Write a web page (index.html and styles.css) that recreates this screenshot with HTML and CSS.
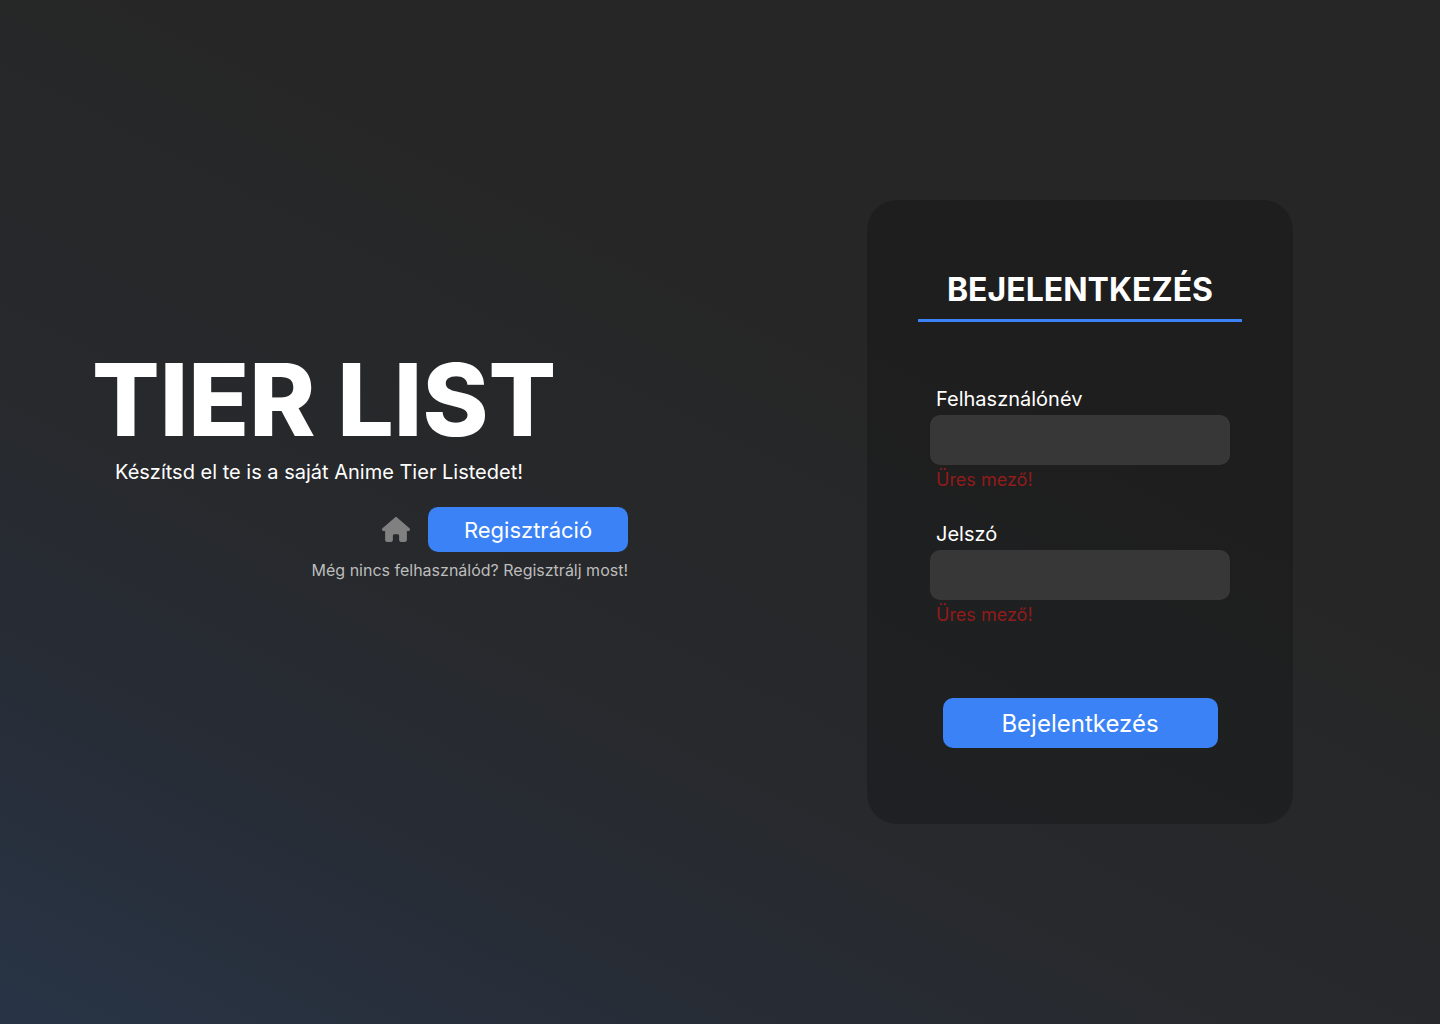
FILE: index.html
```html
<!DOCTYPE html>
<html lang="hu">
<head>
<meta charset="utf-8">
<meta name="viewport" content="width=device-width, initial-scale=1">
<title>Tier List – Bejelentkezés</title>
<link rel="stylesheet" href="styles.css">
</head>
<body>
<main class="page">
  <section class="intro">
    <h1 class="intro-title">TIER LIST</h1>
    <p class="intro-text">Készítsd el te is a saját Anime Tier Listedet!</p>
    <div class="intro-actions">
      <a class="home" href="#" aria-label="Főoldal">
        <svg class="home-icon" viewBox="0 0 576 512" aria-hidden="true"><path d="M575.800 255.500c0 18-15 32.100-32 32.100h-32l.7 160.200c0 2.700-.2 5.400-.5 8.100V472c0 22.100-17.900 40-40 40H456c-1.100 0-2.200 0-3.300-.1c-1.400 .1-2.800 .1-4.200 .1H416 392c-22.100 0-40-17.900-40-40V448 384c0-17.700-14.300-32-32-32H256c-17.700 0-32 14.300-32 32v64 24c0 22.100-17.900 40-40 40H160 128.100c-1.500 0-3-.1-4.500-.2c-1.200 .1-2.400 .2-3.600 .2H104c-22.100 0-40-17.900-40-40V360c0-.9 0-1.900 .1-2.800V287.600H32c-18 0-32-14-32-32.100c0-9 3-17 10-24L266.400 8c7-7 15-8 22-8s15 2 21 7L564.800 231.500c8 7 12 15 11 24z"/></svg>
      </a>
      <button class="button" type="button">Regisztráció</button>
    </div>
    <p class="intro-note">Még nincs felhasználód? Regisztrálj most!</p>
  </section>
  <section class="login">
    <form class="card">
      <h2 class="card-title">BEJELENTKEZÉS</h2>
      <div class="field">
        <label class="field-label" for="username">Felhasználónév</label>
        <input class="field-input" id="username" type="text" aria-describedby="username-error">
        <p class="field-error" id="username-error">Üres mező!</p>
      </div>
      <div class="field">
        <label class="field-label" for="password">Jelszó</label>
        <input class="field-input" id="password" type="password" aria-describedby="password-error">
        <p class="field-error" id="password-error">Üres mező!</p>
      </div>
      <button class="button button-submit" type="button">Bejelentkezés</button>
    </form>
  </section>
</main>
</body>
</html>
```

FILE: styles.css
```css
* {
  box-sizing: border-box;
}

body {
  margin: 0;
  font-family: Inter, sans-serif;
  color: #fff;
  background: #262626;
}

h1, h2, p {
  margin: 0;
}

.page {
  display: grid;
  grid-template-columns: 1fr 1fr;
  align-items: center;
  min-height: 100vh;
  background: linear-gradient(27deg, #283446, #272c35 22%, #27292c 38%, #262626 65%);
}

.intro {
  padding: 0 92px 102px;
}

.intro-title {
  font-size: 100px;
  line-height: 120px;
  font-weight: 800;
  white-space: nowrap;
}

.intro-text {
  padding-left: 23px;
  font-size: 20px;
  line-height: 24px;
}

.intro-actions {
  display: flex;
  align-items: center;
  justify-content: flex-end;
  gap: 18px;
  margin-top: 23px;
}

.home {
  display: flex;
  color: #808080;
}

.home-icon {
  width: 28px;
  height: 25px;
  fill: currentColor;
}

.button {
  width: 200px;
  height: 45px;
  padding: 0;
  border: 0;
  border-radius: 10px;
  background: #3b82f6;
  color: #fff;
  font-family: inherit;
  font-size: 22px;
  cursor: pointer;
}

.intro-note {
  margin-top: 6px;
  color: #bdbdbd;
  font-size: 16px;
  line-height: 24px;
  text-align: right;
}

.login {
  display: flex;
  justify-content: center;
}

.card {
  display: flex;
  flex-direction: column;
  align-items: center;
  width: 426px;
  padding: 64px 51px 76px;
  border-radius: 30px;
  background: rgb(0 0 0 / 20%);
}

.card-title {
  width: 100%;
  margin-bottom: 65px;
  padding-bottom: 4px;
  border-bottom: 3px solid #3b82f6;
  font-size: 32px;
  line-height: 51px;
  font-weight: 700;
  text-align: center;
}

.field {
  width: 300px;
  margin-bottom: 31px;
}

.field-label {
  display: block;
  padding: 0 6px;
  font-size: 20px;
  line-height: 24px;
  margin-bottom: 4px;
}

.field-input {
  display: block;
  width: 100%;
  height: 50px;
  padding: 0 12px;
  border: 0;
  border-radius: 10px;
  background: #373737;
  color: #fff;
  font: inherit;
  font-size: 20px;
}

.field-error {
  padding: 4px 6px 0;
  color: #911b1b;
  font-size: 18px;
  line-height: 22px;
}

.button-submit {
  width: 275px;
  height: 50px;
  margin-top: 41px;
  font-size: 24px;
}
```
